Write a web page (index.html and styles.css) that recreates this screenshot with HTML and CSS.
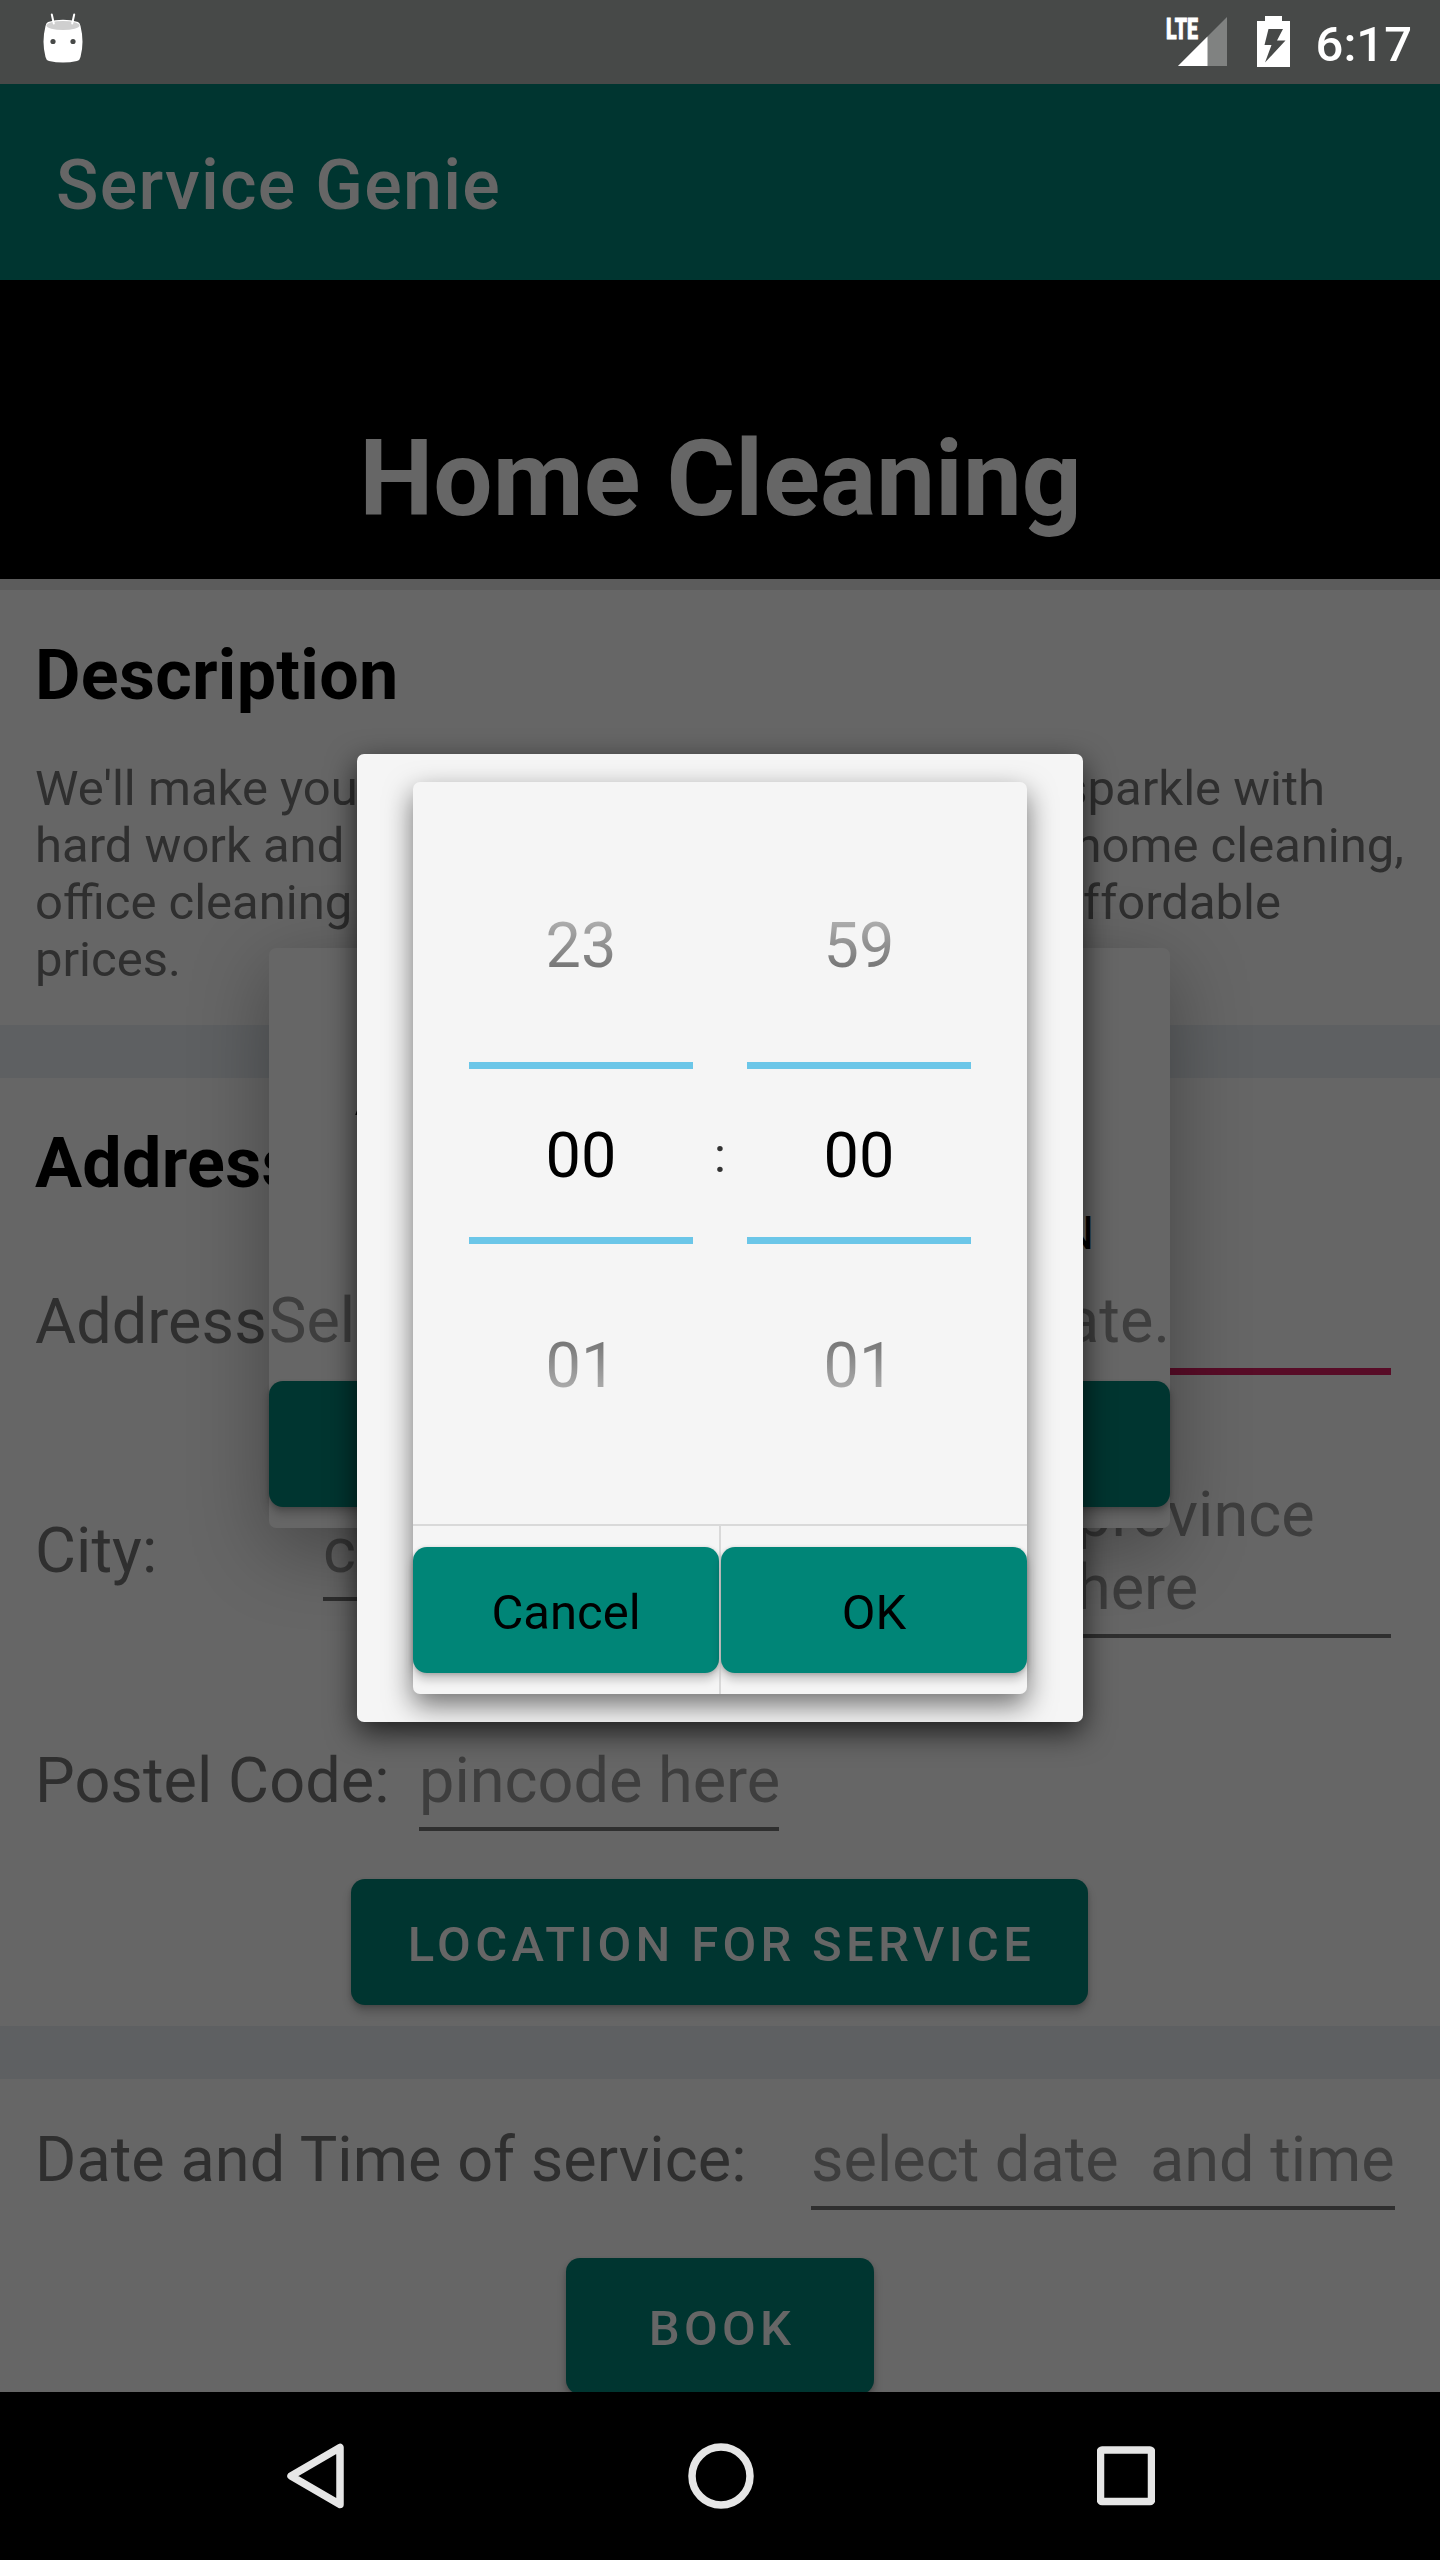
FILE: index.html
```html
<!DOCTYPE html>
<html lang="en">
<head>
<meta charset="utf-8">
<title>Service Genie</title>
<link rel="stylesheet" href="styles.css">
</head>
<body>
<div class="screen">
  <header class="status">
    <svg class="status-droid" width="40" height="50" viewBox="0 0 40 50">
      <path d="M5 9Q20 4.500 35 9Q37 10 37.500 13Q41.500 29 37.500 44Q37 47 34 48Q20 51 6 48Q3 47 2.500 44Q-1.500 29 2.500 13Q3 10 5 9Z" fill="#fff"/>
      <ellipse cx="20" cy="12.500" rx="16.500" ry="4.600" fill="#cfcfcf"/>
      <path d="M8.800 1.500l2 9M31.200 1.500l-2 9" stroke="#fff" stroke-width="2" stroke-linecap="round"/>
      <circle cx="10" cy="28.500" r="2.600" fill="#474948"/><circle cx="30" cy="28.500" r="2.600" fill="#474948"/>
    </svg>
    <svg class="status-signal" width="62" height="50" viewBox="0 0 62 50">
      <path d="M61 0V49H12Z" fill="#808281"/>
      <path d="M41.500 19.500V49H12Z" fill="#fff"/>
      <text class="lte" x="0" y="22" textLength="32" lengthAdjust="spacingAndGlyphs">LTE</text>
    </svg>
    <svg class="status-battery" width="33" height="51" viewBox="0 0 33 51">
      <path d="M8 0H25V5H33V51H0V5H8Z" fill="#fff"/>
      <path d="M11.500 13H26L20 24.500H28.500L8 46.500L14.500 29H7.500Z" fill="#474948"/>
    </svg>
    <span class="clock">6:17</span>
  </header>

  <div class="appbar">Service Genie</div>
  <div class="hero"><h1>Home Cleaning</h1></div>

  <section class="description">
    <h2>Description</h2>
    <div class="para">
      <p class="line line-a"><span>We'll make your</span><span>sparkle with</span></p>
      <p class="line line-b"><span>hard work and</span><span>home cleaning,</span></p>
      <p class="line line-c"><span>office cleaning</span><span>affordable</span></p>
      <p class="line">prices.</p>
    </div>
  </section>
  <div class="band"></div>

  <section class="address">
    <h2>Address</h2>
    <div class="row row-address"><span class="label">Address:</span><div class="field active"></div></div>
    <div class="row row-city">
      <span class="label">City:</span>
      <div class="field city">city</div>
      <div class="field province">province here</div>
    </div>
    <div class="row row-postal"><span class="label">Postel Code:</span><div class="field pincode">pincode here</div></div>
    <button class="btn location">LOCATION FOR SERVICE</button>
  </section>
  <div class="band"></div>

  <section class="booking">
    <div class="row row-date"><span class="label">Date and Time of service:</span><div class="field when">select date&nbsp; and time</div></div>
    <button class="btn book">BOOK</button>
  </section>

  <nav class="navbar">
    <svg width="58" height="66" viewBox="0 0 58 66"><path d="M53 4.500V61.500L4 33Z"/></svg>
    <svg width="66" height="66" viewBox="0 0 66 66"><circle cx="33" cy="33" r="29"/></svg>
    <svg width="58" height="66" viewBox="0 0 58 66"><rect x="3.500" y="7" width="51" height="51.500" rx="1.500"/></svg>
  </nav>

  <div class="sheet">
    <div class="sheet-title">A</div>
    <div class="sheet-sub">N</div>
    <div class="sheet-hint"><span>Select</span><span>date.</span></div>
    <div class="btn sheet-btn"></div>
  </div>

  <div class="window">
    <div class="picker">
      <div class="wheels">
        <div class="wheel"><span class="prev">23</span><span class="current">00</span><span class="next">01</span></div>
        <span class="colon">:</span>
        <div class="wheel"><span class="prev">59</span><span class="current">00</span><span class="next">01</span></div>
      </div>
      <div class="actions">
        <div class="action"><button>Cancel</button></div>
        <div class="action"><button>OK</button></div>
      </div>
    </div>
  </div>
</div>
</body>
</html>
```
FILE: styles.css
```css
* { box-sizing: border-box; margin: 0; }
body { font-family: Roboto, "Noto Sans", sans-serif; }
button { font-family: inherit; border: 0; padding: 0; }

.screen {
  position: relative;
  display: flex;
  flex-direction: column;
  width: 1440px;
  height: 2560px;
  overflow: hidden;
  background: #666;
  color: #2f2f2f;
}

/* system status bar */
.status {
  display: flex;
  align-items: flex-start;
  height: 84px;
  flex: none;
  padding: 0 28px 0 43px;
  background: #474948;
}
.status-droid { margin-top: 13px; }
.status-signal { margin: 17px 29px 0 auto; overflow: visible; }
.status-battery { margin: 16px 26px 0 0; }
.lte { font-size: 29.500px; font-weight: 900; fill: #fff; stroke: #fff; stroke-width: 0.800px; }
.clock { padding-top: 16px; font-size: 49px; line-height: 58px; font-weight: 500; color: #fff; }

.appbar {
  height: 196px;
  flex: none;
  padding: 6px 56px 0;
  background: #003530;
  color: #666;
  font-size: 70px;
  line-height: 190px;
  font-weight: 500;
  letter-spacing: 1.250px;
}
.hero {
  display: flex;
  align-items: flex-end;
  justify-content: center;
  height: 299px;
  flex: none;
  padding: 0 0 38px 1px;
  background: #000;
}
.hero h1 { font-size: 105px; line-height: 123px; font-weight: 700; letter-spacing: 0.050px; color: #666; }

h2 { font-size: 70px; line-height: 82px; font-weight: 700; letter-spacing: 0.300px; color: #000; }

.description {
  display: flex;
  flex-direction: column;
  gap: 44px;
  height: 446px;
  flex: none;
  padding: 44px 35px 0;
  border-top: 11px solid #5c5c5c;
}
.line { display: flex; justify-content: space-between; font-size: 49px; line-height: 57px; }
.line-a { width: 1290px; }
.line-b { width: 1369px; }
.line-c { width: 1246px; }
.band { height: 53px; flex: none; background: #5e6062; }

.address { display: flex; flex-direction: column; height: 948px; flex: none; padding: 44px 49px 0 35px; }
.row { display: flex; flex: none; align-items: flex-end; font-size: 63px; line-height: 74px; }
.label { white-space: nowrap; letter-spacing: 0.050px; }
.field { padding: 0 3px 9px; border-bottom: 4px solid #2f2f2f; color: #3e3e3e; white-space: nowrap; }
.row-address { height: 171px; gap: 20px; }
.row-address .label { padding-bottom: 16px; }
.active { flex: 1; height: 90px; border-bottom: 7px solid #580c27; }
.row-city { height: 263px; }
.row-city .label { width: 288px; padding-bottom: 50px; }
.city { width: 250px; margin-bottom: 37px; padding-left: 0; }
.province { width: 318px; margin-left: auto; padding-bottom: 10px; line-height: 73px; white-space: normal; }
.row-postal { height: 193px; }
.row-postal .label { width: 384px; padding-bottom: 13px; }
.pincode { width: 360px; padding-left: 0; }

.btn {
  align-self: center;
  flex: none;
  border-radius: 14px;
  background: #003530;
  color: #666;
  font-size: 49px;
  font-weight: 500;
  letter-spacing: 4.300px;
  box-shadow: 0 7px 10px rgba(0, 0, 0, 0.2), 0 2px 4px rgba(0, 0, 0, 0.15);
}
.location { width: 737px; height: 126px; margin: 48px 0 0 13px; padding: 4px 0 0 4px; }

.booking { display: flex; flex-direction: column; height: 313px; flex: none; padding: 0 45px 0 35px; overflow: hidden; }
.row-date { height: 131px; justify-content: space-between; }
.row-date .label { padding-bottom: 13px; }
.when { width: 584px; padding-left: 0; }
.book { width: 308px; height: 136px; margin: 48px 0 0 10px; padding: 4px 0 0 4px; }

/* system navigation bar */
.navbar {
  display: flex;
  align-items: center;
  justify-content: space-between;
  height: 168px;
  flex: none;
  padding: 0 285px 0 287px;
  background: #000;
}
.navbar svg { fill: none; stroke: #e6e6e6; stroke-width: 7.500px; stroke-linejoin: round; }

/* date and time sheet, under the picker window */
.sheet {
  position: absolute;
  left: 269px;
  top: 948px;
  display: flex;
  flex-direction: column;
  width: 901px;
  height: 580px;
  border-radius: 7px;
  background: #666;
  box-shadow: 0 20px 80px rgba(0, 0, 0, 0.33);
}
.sheet-title { margin-top: 109px; padding-left: 86px; font-size: 63px; line-height: 74px; font-weight: 700; color: #000; }
.sheet-sub { margin-top: 74px; padding-right: 76px; text-align: right; font-size: 46px; line-height: 56px; color: #000; }
.sheet-hint {
  display: flex;
  justify-content: space-between;
  margin-top: 23px;
  font-size: 63px;
  line-height: 74px;
  color: #3e3e3e;
}
.sheet-btn { align-self: stretch; height: 126px; margin-top: 23px; }

.window {
  position: absolute;
  left: 357px;
  top: 754px;
  width: 726px;
  height: 968px;
  padding: 28px 56px;
  border-radius: 7px;
  background: #f5f5f5;
  box-shadow: 0 10px 30px rgba(0, 0, 0, 0.7);
}
.picker {
  display: flex;
  flex-direction: column;
  height: 912px;
  border-radius: 7px;
  background: #f5f5f5;
  box-shadow: 0 11px 28px rgba(0, 0, 0, 0.55);
}
.wheels { display: flex; justify-content: center; height: 742px; padding-top: 127px; }
.wheel { display: flex; flex-direction: column; width: 224px; text-align: center; font-size: 63px; line-height: 74px; }
.prev, .next { color: transparent; background-clip: text; -webkit-background-clip: text; }
.prev { height: 153px; background-image: linear-gradient(#b2b2b2 8px, #727272 62px); background-size: 100% 74px; background-repeat: no-repeat; }
.current { height: 182px; padding-top: 50px; border: solid #6bc6e8; border-width: 7px 0; color: #000; }
.next { height: 74px; margin-top: 85px; background-image: linear-gradient(#727272 8px, #aeaeae 62px); }
.colon { width: 54px; padding-top: 218px; text-align: center; font-size: 49px; line-height: 58px; color: #333; }
.actions { display: flex; flex: 1; border-top: 2px solid #d9d9d9; }
.action { display: flex; flex: 1; padding-top: 21px; }
.action + .action { border-left: 2px solid #d9d9d9; }
.action button {
  flex: 1;
  height: 126px;
  padding-top: 4px;
  border-radius: 14px;
  background: #008577;
  color: #000;
  font-size: 49px;
  box-shadow: 0 7px 10px rgba(0, 0, 0, 0.2), 0 1px 4px rgba(0, 0, 0, 0.2);
}
```
